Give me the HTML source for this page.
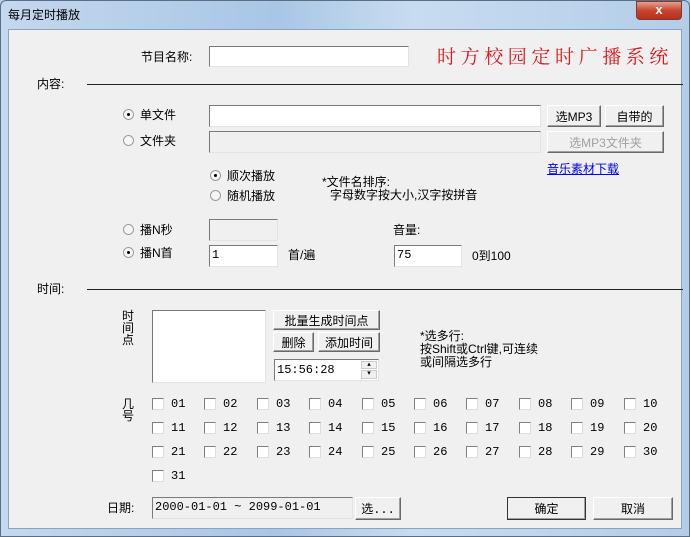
<!DOCTYPE html>
<html><head><meta charset="utf-8"><style>
*{margin:0;padding:0;box-sizing:border-box}
body{width:690px;height:537px;overflow:hidden;background:#b9d1ea;font-family:"Liberation Sans","Noto Sans CJK SC",sans-serif;font-size:12px;color:#000;position:relative}
.frame{position:absolute;left:0;top:0;width:690px;height:537px;background:linear-gradient(90deg,#c4d8ee 0%,#a9c6e6 40%,#c8dcf0 60%,#b3cde9 100%);border:1px solid #5a6e86;border-radius:6px 6px 0 0}
.client{position:absolute;left:8px;top:29px;width:674px;height:500px;background:#f0f0f0;border:1px solid #8ca3be}
.a{position:absolute;white-space:nowrap;line-height:14px}
.in{position:absolute;background:#fff;border:1px solid #abadb3;border-top-color:#7a7a7a;border-left-color:#7a7a7a;border-right-color:#e3e3e3;border-bottom-color:#e3e3e3;padding:2px 2px;line-height:14px;font-family:"Liberation Mono","Noto Sans CJK SC",monospace}
.dis{background:#f0f0f0}
.btn{position:absolute;background:#f0f0f0;border:1px solid;border-color:#fff #696969 #696969 #fff;box-shadow:inset -1px -1px 0 #a0a0a0;text-align:center;display:flex;align-items:center;justify-content:center}
.rad{position:absolute;width:11px;height:11px;border-radius:50%;border:1px solid #9a9a9a;background:#f6f6f6}
.rad.on::after{content:"";position:absolute;left:3px;top:3px;width:3px;height:3px;border-radius:50%;background:#000}
.cb{position:absolute;width:12px;height:12px;border:1px solid #808080;border-right-color:#ddd;border-bottom-color:#ddd;background:#fff}
.line{position:absolute;height:1px;background:#222}
</style></head><body>
<div class="frame"></div>
<div class="a" style="left:8px;top:8px">每月定时播放</div>
<div style="position:absolute;left:636px;top:1px;width:46px;height:19px;border:1px solid #7a3a30;border-radius:0 0 4px 4px;background:linear-gradient(#e8a090,#c8442c 50%,#b8301c);color:#fff;font-weight:bold;text-align:center;line-height:16px;font-size:13px">x</div>
<div class="client"></div>

<div class="a" style="left:141px;top:50px">节目名称:</div>
<div class="in" style="left:209px;top:46px;width:200px;height:21px"></div>
<div class="a" style="left:437px;top:48px;font-size:19px;line-height:20px;color:#e0161b;letter-spacing:4.6px;font-family:'Liberation Serif','Noto Serif CJK SC',serif">时方校园定时广播系统</div>

<div class="a" style="left:37px;top:77px">内容:</div>
<div class="line" style="left:87px;top:84px;width:596px"></div>

<div class="rad on" style="left:123px;top:109px"></div>
<div class="a" style="left:140px;top:108px">单文件</div>
<div class="in" style="left:209px;top:105px;width:332px;height:22px"></div>
<div class="btn" style="left:547px;top:105px;width:54px;height:22px">选MP3</div>
<div class="btn" style="left:605px;top:105px;width:59px;height:22px">自带的</div>

<div class="rad" style="left:123px;top:135px"></div>
<div class="a" style="left:140px;top:134px">文件夹</div>
<div class="in dis" style="left:209px;top:131px;width:332px;height:22px"></div>
<div class="btn" style="left:547px;top:131px;width:117px;height:22px;color:#a0a0a0">选MP3文件夹</div>
<div class="a" style="left:547px;top:162px;color:#0000ee;text-decoration:underline">音乐素材下载</div>

<div class="rad on" style="left:210px;top:170px"></div>
<div class="a" style="left:227px;top:169px">顺次播放</div>
<div class="rad" style="left:210px;top:190px"></div>
<div class="a" style="left:227px;top:189px">随机播放</div>
<div class="a" style="left:322px;top:175px">*文件名排序:</div>
<div class="a" style="left:330px;top:188px">字母数字按大小,汉字按拼音</div>

<div class="rad" style="left:123px;top:224px"></div>
<div class="a" style="left:140px;top:223px">播N秒</div>
<div class="in dis" style="left:209px;top:219px;width:69px;height:22px"></div>
<div class="a" style="left:393px;top:223px">音量:</div>

<div class="rad on" style="left:123px;top:247px"></div>
<div class="a" style="left:140px;top:246px">播N首</div>
<div class="in" style="left:209px;top:245px;width:69px;height:22px">1</div>
<div class="a" style="left:288px;top:248px">首/遍</div>
<div class="in" style="left:394px;top:245px;width:68px;height:22px">75</div>
<div class="a" style="left:472px;top:249px">0到100</div>

<div class="a" style="left:37px;top:282px">时间:</div>
<div class="line" style="left:87px;top:289px;width:596px"></div>

<div class="a" style="left:122px;top:310px;width:12px;line-height:12px;white-space:normal">时间点</div>
<div class="in" style="left:152px;top:310px;width:114px;height:73px"></div>
<div class="btn" style="left:273px;top:310px;width:107px;height:20px">批量生成时间点</div>
<div class="btn" style="left:273px;top:332px;width:41px;height:20px">删除</div>
<div class="btn" style="left:318px;top:332px;width:62px;height:20px">添加时间</div>
<div class="in" style="left:274px;top:359px;width:105px;height:22px;padding-top:3px">15:56:28</div>
<div style="position:absolute;left:361px;top:361px;width:16px;height:8px;background:#f0f0f0;border:1px solid #ccc;font-size:7px;line-height:6px;text-align:center">▴</div>
<div style="position:absolute;left:361px;top:370px;width:16px;height:9px;background:#f0f0f0;border:1px solid #ccc;font-size:7px;line-height:6px;text-align:center">▾</div>
<div class="a" style="left:420px;top:330px;line-height:13px">*选多行:<br>按Shift或Ctrl键,可连续<br>或间隔选多行</div>

<div class="a" style="left:122px;top:398px;width:12px;line-height:12px;white-space:normal">几号</div>
<div id="cbs"></div>

<div class="a" style="left:107px;top:501px">日期:</div>
<div class="in dis" style="left:152px;top:497px;width:201px;height:22px">2000-01-01 ~ 2099-01-01</div>
<div class="btn" style="left:355px;top:497px;width:46px;height:23px;font-family:'Liberation Mono','Noto Sans CJK SC',monospace">选...</div>
<div class="btn" style="left:507px;top:497px;width:79px;height:23px;outline:1px solid #333;outline-offset:-1px">确定</div>
<div class="btn" style="left:593px;top:497px;width:80px;height:23px">取消</div>
<script>
var h="";for(var i=1;i<=31;i++){var r=Math.floor((i-1)/10),c=(i-1)%10;var x=Math.round(152+c*52.4),y=398+r*24;h+='<div class="cb" style="left:'+x+'px;top:'+y+'px"></div><div class="a" style="left:'+(x+19)+'px;top:'+(y-1)+'px;font-family:\'Liberation Mono\',monospace">'+(i<10?'0'+i:i)+'</div>';}
document.getElementById("cbs").innerHTML=h;
</script>
</body></html>
